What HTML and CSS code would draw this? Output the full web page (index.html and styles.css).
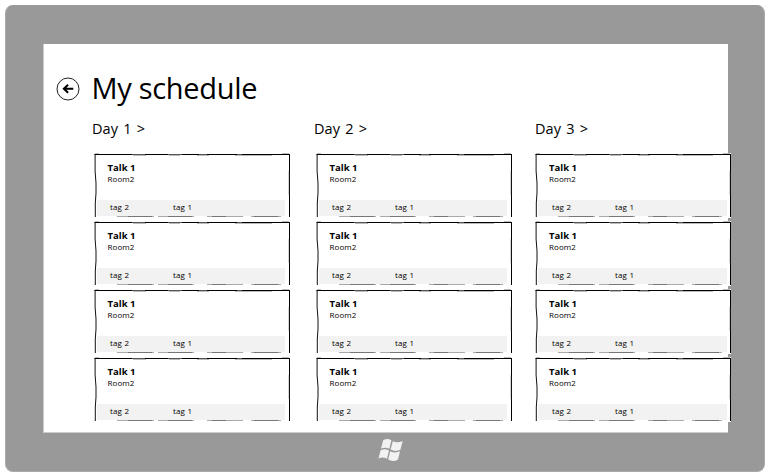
FILE: index.html
```html
<!DOCTYPE html>
<html lang="en">
<head>
<meta charset="utf-8">
<title>My schedule</title>
<link rel="stylesheet" href="styles.css">
</head>
<body>
<svg class="defs" aria-hidden="true">
  <symbol id="frame" viewBox="0 0 197 64">
    <path d="M.5 1.5H196" stroke="#000" fill="none"/>
    <path d="M1 .5H5M188 .5H195M39 2.5H52M75 2.5H86M103 2.5H115M141 2.5H178" stroke="#bbb" fill="none"/>
    <path d="M38 1.5H51M74 1.5H88M105 1.5H113M143 1.5H148" stroke="#555" fill="none"/>
    <path d="M1.1 1V18L2 30V40L1.3 50V64" stroke="#111" fill="none"/>
    <path d="M195.5 1V64" stroke="#000" fill="none"/>
    <path d="M194.7 18V42" stroke="#aaa" stroke-width=".6" fill="none"/>
    <path d="M23 63.5H60M64 63.5H100M113 63.5H149M157 63.5H187" stroke="#aaa" fill="none"/>
    <path d="M34 63.5H58M74 63.5H98M118 63.5H132M160 63.5H184" stroke="#777" fill="none"/>
  </symbol>
</svg>
<div class="tablet">
  <main class="screen">
    <header class="header">
      <svg class="back" viewBox="0 0 24 24">
        <circle cx="12" cy="12" r="11" fill="none" stroke="#222" stroke-width="1"/>
        <path d="M17.3 11.8H8M12.1 7.8L7.9 11.8L12.1 15.8" fill="none" stroke="#000" stroke-width="2.1"/>
      </svg>
      <h1 class="title">My schedule</h1>
    </header>
    <div class="days" id="days"></div>
  </main>
  <footer class="bezel">
    <svg class="logo" viewBox="0 0 26 24" fill="#f2f2f2">
      <path d="M5.2 2.2Q9.5-.4 13.4 2.2L11.4 10.8Q7.3 8.6 3 10.6Z"/>
      <path d="M14.8 3.2Q19 5.4 24.7 3L22.4 11.8Q17.4 14.2 12.6 11.6Z"/>
      <path d="M2.6 12.2Q7 10 11 12.4L9 20.8Q5 18.4.5 20.4Z"/>
      <path d="M12.2 13.2Q16.8 15.6 22 13.3L20 21.4Q15.2 24.4 10.2 21.6Z"/>
    </svg>
  </footer>
</div>
<script src="app.js"></script>
</body>
</html>
```
FILE: styles.css
```css
* { box-sizing: border-box; }
body {
  margin: 0;
  padding: 5px 6px 4px 5px;
  width: 771px;
  height: 476px;
  overflow: hidden;
  background: #fff;
  color: #000;
  font-family: "Open Sans", "Noto Sans", sans-serif;
}
.defs { position: absolute; width: 0; height: 0; }
.tablet {
  width: 760px;
  height: 467px;
  padding: 38px 36px 0 38px;
  background: #999;
  border: 1px solid #aaa;
  border-top-color: #999;
  border-radius: 8px;
}
.screen {
  width: 685px;
  height: 389px;
  margin-left: -1px;
  padding: 29px 0 0 12px;
  background: #fff;
  border: 1px solid #ccc;
  border-width: 0 0 1px 1px;
}
.header { display: flex; height: 46px; }
.back { flex: none; width: 24px; height: 24px; margin-top: 4px; }
.title {
  margin: -6px 0 0 11.5px;
  font-size: 29px;
  line-height: 42px;
  font-weight: 400;
  letter-spacing: -.3px;
  white-space: nowrap;
}
.days {
  display: grid;
  grid-template-columns: 222px 220px 198px;
  padding-left: 36px;
  width: 676px;
}
.day-title {
  margin: 0 0 14px;
  height: 20px;
  font-size: 14.5px;
  line-height: 20px;
  font-weight: 400;
  letter-spacing: .1px;
  word-spacing: 1.2px;
  white-space: nowrap;
}
.day:last-child .day-title { margin-left: 1px; }
.cards { display: grid; gap: 4px; margin-left: 2px; }
.card {
  display: flex;
  flex-direction: column;
  position: relative;
  width: 196px;
  height: 64px;
  padding: 9px 5px 1px 3px;
  background: #fff;
  box-shadow: 0 1px #fff;
}
.day:last-child .cards { margin-left: 1px; }
.day:last-child .card { padding-right: 4px; }
.day:last-child .talk, .day:last-child .room { margin-left: 11px; }
.day:last-child .tags { padding-left: 14px; }
.frame { position: absolute; top: 0; left: 0; width: 197px; height: 64px; }
.talk { margin: 0 0 0 10.5px; font-size: 9.5px; line-height: 12px; font-weight: 700; }
.room { margin: -1px 0 0 10.5px; font-size: 8px; line-height: 11px; letter-spacing: .1px; }
.tags {
  display: grid;
  grid-template-columns: 63px 1fr;
  height: 16px;
  margin-top: auto;
  padding-left: 13px;
  background: #f2f2f2;
  font-size: 8px;
  line-height: 13px;
  letter-spacing: .1px;
  word-spacing: .4px;
}
.bezel { display: flex; padding: 5px 0 0 334px; }
.logo { width: 26px; height: 24px; }
```
FILE: app.js
```js
const talk = { title: "Talk 1", room: "Room2", tags: ["tag 2", "tag 1"] };
const days = ["Day 1", "Day 2", "Day 3"].map(name => ({ name, talks: Array(4).fill(talk) }));

const card = t => `
  <article class="card">
    <svg class="frame"><use href="#frame"/></svg>
    <h3 class="talk">${t.title}</h3>
    <p class="room">${t.room}</p>
    <div class="tags">${t.tags.map(tag => `<span>${tag}</span>`).join("")}</div>
  </article>`;

document.getElementById("days").innerHTML = days.map(d => `
  <section class="day">
    <h2 class="day-title">${d.name} &gt;</h2>
    <div class="cards">${d.talks.map(card).join("")}</div>
  </section>`).join("");
```
